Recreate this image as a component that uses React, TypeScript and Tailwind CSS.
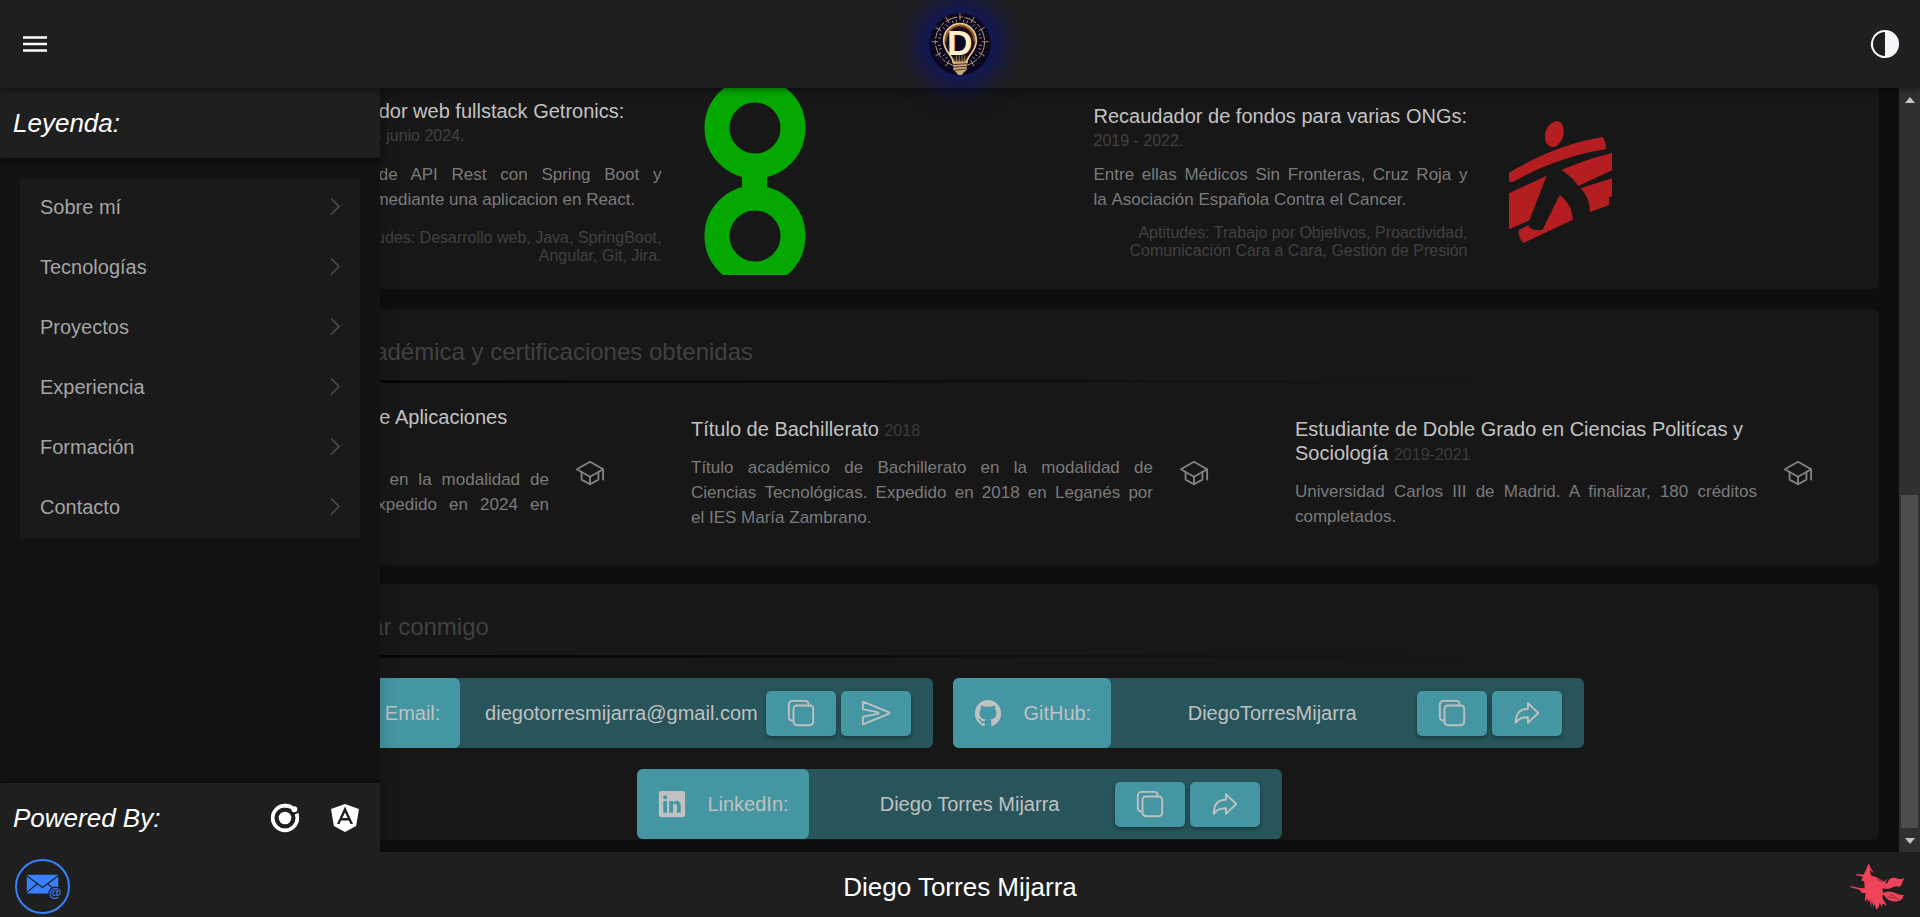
import type { ReactNode } from "react";
import type { IconType } from "react-icons";
import {
  IoArrowRedoOutline,
  IoContrast,
  IoCopyOutline,
  IoLogoAngular,
  IoLogoGithub,
  IoLogoLinkedin,
  IoMail,
  IoSchoolOutline,
  IoSendOutline,
} from "react-icons/io5";

const menuItems = ["Sobre mí", "Tecnologías", "Proyectos", "Experiencia", "Formación", "Contacto"];

const barShadow =
  "shadow-[0_2px_4px_-1px_rgba(0,0,0,0.2),0_4px_5px_rgba(0,0,0,0.14),0_1px_10px_rgba(0,0,0,0.12)]";

const raysAngles = Array.from({ length: 36 }, (_, i) => i * 10);

function BulbLogo() {
  return (
    <svg viewBox="87 39 186 186" className="size-[62px] rounded-full shadow-[0_0_30px_8px_#0a1478]" aria-hidden="true">
      <defs>
        <radialGradient id="bulb">
          <stop offset="0" stopColor="#0c0820" />
          <stop offset="0.78" stopColor="#150c1c" />
          <stop offset="1" stopColor="#8a5a2c" />
        </radialGradient>
      </defs>
      <circle cx="180" cy="132" r="93" fill="#0a0620" />
      <circle cx="180" cy="125" r="74" fill="none" stroke="#b89c70" strokeWidth="3" strokeDasharray="38 5 12 5" />
      <circle cx="180" cy="125" r="84" fill="none" stroke="#5e4c3c" strokeWidth="2" strokeDasharray="3 12" />
      <g stroke="#bda279" strokeWidth="2.5">
        {raysAngles.map((a) => (
          <line key={a} x1="180" y1={a % 30 === 0 ? 40 : 58} x2="180" y2={a % 30 === 0 ? 60 : 66} transform={`rotate(${a} 180 125)`} />
        ))}
      </g>
      <path
        d="M160 188C158 165 131 155 131 122a49 51 0 0 1 98 0c0 33-27 43-29 66Z"
        fill="url(#bulb)"
        stroke="#e9c98d"
        strokeWidth="5"
      />
      <path d="M137 122a43 46 0 0 1 86 0" fill="none" stroke="#a4682f" strokeWidth="4" />
      <path d="M170 166v20M178 166v20M186 166v20M194 166v20" stroke="#c7a468" strokeWidth="2" />
      <path d="M160 187h40v22l-8 8-7 8h-10l-7-8-8-8Z" fill="#c6a87c" />
      <path d="M160 194l40-3M160 202l40-3M163 211l34-4" stroke="#4c3323" strokeWidth="3" />
      <text x="141" y="166" fontSize="106" fontWeight="700" fontFamily="Liberation Sans, sans-serif" fill="#fdf0c8">
        D
      </text>
    </svg>
  );
}

function GetronicsLogo() {
  return (
    <svg viewBox="0 0 102 187" className="h-[187px] w-[102px] shrink-0" aria-hidden="true">
      <g fill="none" stroke="#04a800" strokeWidth="25">
        <circle cx="51" cy="40" r="38" />
        <circle cx="51" cy="148" r="38" />
      </g>
      <rect x="38" y="85" width="25" height="18" fill="#04a800" />
    </svg>
  );
}

function DoctorsLogo() {
  return (
    <svg viewBox="559 360 252 366" preserveAspectRatio="none" className="h-[122px] w-[103px] shrink-0" fill="#b51e20" aria-hidden="true">
      <path d="M677 360C688 362 694 376 693 396C691 418 679 437 668 438C655 438 646 425 647 404C648 382 661 361 677 360Z" />
      <path d="M559 515C625 466 706 424 788 408C794 417 797 430 796 445C718 460 640 493 567 544L559 541Z" />
      <path d="M559 577L651 524L609 658L559 685Z" />
      <path d="M687 507C725 487 768 469 811 456V508L729 555C718 536 702 518 687 507Z" />
      <path d="M734 562L811 532V587L804 588V612L757 633C756 603 749 579 734 562Z" />
      <path d="M683 582C704 602 714 626 715 656L595 726C585 717 581 703 583 687L606 673C611 686 627 690 641 686Z" />
    </svg>
  );
}

function WitchIcon() {
  return (
    <svg viewBox="91 69 166 143" className="h-[47px] w-[55px]" aria-hidden="true">
      <path
        fill="#ee4359"
        d="M147 70L151 80L161 97L159 98L151 89L154 107L165 110C176 112 184 123 195 126L202 117C203 124 199 130 195 132L205 130C206 121 211 115 222 114C230 113 237 118 243 118C249 118 253 117 255 114C254 121 251 125 247 128L250 128C248 135 244 139 240 142C234 138 226 141 218 144C207 149 196 148 188 146C191 151 191 156 190 160L201 157C212 153 225 158 232 162C240 166 248 167 256 166C249 170 252 174 250 177C240 189 215 189 203 178L191 165C187 172 190 179 194 184L203 200L189 192L188 204L181 190L178 202L171 211L165 192L163 204L156 184L155 204L149 180L144 190L144 176L135 188L138 160L128 160L121 155L122 151L92 143L92 139L120 145L136 146C132 140 137 132 132 124L124 122L129 113L126 109L108 106V103L132 104L138 92Z"
      />
      <path d="M172 117L188 127M205 172L240 179M210 164L228 171" fill="none" stroke="#1f1f1f" strokeWidth="1.5" />
    </svg>
  );
}

function IonicIcon() {
  return (
    <svg viewBox="-48 -48 96 96" className="size-8" aria-hidden="true">
      <circle r="37" fill="none" stroke="#fff" strokeWidth="11" />
      <circle r="19" fill="#fff" />
      <circle cx="28" cy="-25" r="14" fill="#1f1f1f" />
      <path d="M12 -42L24 -36L18 -26L6 -32Z" fill="#1f1f1f" />
      <path d="M0 -42.500C10 -42.500 18 -40 25 -35L20 -25C14 -30 8 -31.500 0 -31.500Z" fill="#fff" />
      <circle cx="28" cy="-26" r="9" fill="#fff" />
    </svg>
  );
}

function MailBadge() {
  return (
    <svg viewBox="0 0 56 56" className="size-[55px]" aria-hidden="true">
      <circle cx="28" cy="28" r="27" fill="none" stroke="#3880ff" strokeWidth="2" />
      <rect x="12" y="16" width="32" height="19" rx="1" fill="#3880ff" />
      <path d="M12 17l16 12 16-12M12 34l11-9M44 34l-11-9" fill="none" stroke="#1f1f1f" strokeWidth="1.2" />
      <circle cx="41" cy="35" r="7" fill="#1f1f1f" />
      <text x="41" y="39" textAnchor="middle" fontSize="13" fontWeight="700" fontFamily="Liberation Sans, sans-serif" fill="#3880ff">
        @
      </text>
    </svg>
  );
}

function SectionHeading({ children }: { children: ReactNode }) {
  return (
    <header>
      <h2 className="flex h-[71px] items-center pt-[14px] pl-[18px] text-2xl text-[#414141]">{children}</h2>
      <div className="h-[3px] w-4/5 bg-linear-to-r from-black to-transparent" />
    </header>
  );
}

type JobProps = { title: string; dates: string; text: string; skills: string; roomy?: boolean; logo: ReactNode };

function Job({ title, dates, text, skills, roomy, logo }: JobProps) {
  return (
    <article className="w-[550px] pl-4">
      <div
        className={
          roomy
            ? "flex items-center justify-between border-b border-[#1b1b1b] pr-4"
            : "flex items-center justify-between border-b border-[#1b1b1b] py-[7px] pr-4"
        }
      >
        <div className={roomy ? "flex w-[374px] flex-col gap-[17px]" : "flex w-[374px] flex-col gap-3"}>
          <div>
            <h3 className="text-xl leading-6 text-[#c3c3c3]">{title}</h3>
            <p className="pt-1 text-base leading-[18px] text-[#414141]">{dates}</p>
          </div>
          <p className="text-justify text-[17px] leading-[25px] text-[#7b7b7b]">{text}</p>
          <p className="text-right text-base leading-[18px] text-[#414141]">{skills}</p>
        </div>
        {logo}
      </div>
    </article>
  );
}

function Degree({ title, year, text }: { title: string; year: string; text: string }) {
  return (
    <article className="flex min-w-0 flex-1 items-center gap-[26px] border-b border-[#1b1b1b] px-[15px] py-[10px]">
      <div className="flex-1">
        <h3 className="text-xl leading-6 text-[#c3c3c3]">
          {title} <span className="text-base leading-6 text-[#3b3b3b]">{year}</span>
        </h3>
        <p className="pt-3 text-justify text-[17px] leading-[25px] text-[#7b7b7b]">{text}</p>
      </div>
      <IoSchoolOutline className="size-[30px] shrink-0 text-[#828282]" />
    </article>
  );
}

type ContactProps = { icon: IconType; label: string; value: string; action: IconType; actionLabel: string; spaced?: boolean };

function Contact({ icon: Icon, label, value, action: Action, actionLabel, spaced }: ContactProps) {
  const button =
    "flex h-[45px] w-[70px] items-center justify-center rounded-[5px] bg-[#4396a2] shadow-[0_2px_4px_rgba(0,0,0,0.35)]";
  return (
    <div className={spaced ? "ml-5 flex h-[70px] rounded-md bg-[#27555b] pr-[22px]" : "flex h-[70px] rounded-md bg-[#27555b] pr-[22px]"}>
      <div className="flex items-center gap-5 rounded-md bg-[#4396a2] px-5 text-xl text-[#c1c1c1]">
        <Icon className="size-[30px]" />
        <span>{label}</span>
      </div>
      <p className="ml-4 flex w-[290px] items-center justify-center text-xl text-[#c1c1c1]">{value}</p>
      <div className="flex items-center gap-[5px] text-[#c1c1c1]">
        <button type="button" aria-label={`Copiar ${label}`} className={button}>
          <IoCopyOutline className="size-[30px]" />
        </button>
        <button type="button" aria-label={actionLabel} className={button}>
          <Action className="size-[30px]" />
        </button>
      </div>
    </div>
  );
}

export default function App() {
  return (
    <div className="flex h-screen flex-col overflow-hidden bg-[#0e0e0e] font-['Liberation_Sans',Arial,sans-serif] text-white">
      <header className={`relative z-20 grid h-22 shrink-0 grid-cols-[1fr_auto_1fr] items-center bg-[#1f1f1f] ${barShadow}`}>
        <div className="flex pl-[23px]">
          <button type="button" aria-label="Menú">
            <svg viewBox="0 0 24 16" className="h-4 w-6" fill="#fff" aria-hidden="true">
              <path d="M0 .2h24v2.600H0zM0 6.700h24v2.600H0zM0 13.200h24v2.600H0z" />
            </svg>
          </button>
        </div>
        <BulbLogo />
        <div className="flex justify-end pr-[19px]">
          <button type="button" aria-label="Cambiar tema" className="text-[#f4f5f8]">
            <IoContrast className="size-8" />
          </button>
        </div>
      </header>

      <div className="relative flex min-h-0 flex-1">
        <main className="flex min-w-0 flex-1 flex-col overflow-hidden px-5">
          <section className="flex h-[201px] shrink-0 items-start justify-center gap-64 rounded-b-md bg-[#171717]">
            <Job
              title="Desarrollador web fullstack Getronics:"
              dates="Marzo 2024 - junio 2024."
              text="Desarrollo de API Rest con Spring Boot y consumida mediante una aplicacion en React."
              skills="Aptitudes: Desarrollo web, Java, SpringBoot, Angular, Git, Jira."
              roomy
              logo={<GetronicsLogo />}
            />
            <div className="flex h-[188px] items-center">
              <Job
                title="Recaudador de fondos para varias ONGs:"
                dates="2019 - 2022."
                text={"Entre ellas Médicos Sin Fronteras, Cruz Roja y la\u00a0Asociación Española Contra el Cancer."}
                skills="Aptitudes: Trabajo por Objetivos, Proactividad, Comunicación Cara a Cara, Gestión de Presión"
                logo={<DoctorsLogo />}
              />
            </div>
          </section>

          <section className="mt-5 flex h-64 shrink-0 flex-col rounded-md bg-[#171717]">
            <SectionHeading>Información de la Formación académica y certificaciones obtenidas</SectionHeading>
            <div className="flex flex-1 items-center gap-14 pr-[51px] pb-px pl-[52px]">
              <Degree
                title="Técnico Superior en Desarrollo de Aplicaciones Web"
                year="2024"
                text={"Título académico de Grado superior en la modalidad de Desarrollo de Aplicaciones Web. Expedido en 2024 en Leganés\u00a0por el IES."}
              />
              <Degree
                title="Título de Bachillerato"
                year="2018"
                text={"Título académico de Bachillerato en la modalidad de Ciencias\u00a0Tecnológicas. Expedido en 2018 en Leganés por el\u00a0IES María Zambrano."}
              />
              <Degree
                title="Estudiante de Doble Grado en Ciencias Politícas y Sociología"
                year="2019-2021"
                text="Universidad Carlos III de Madrid. A finalizar, 180 créditos completados."
              />
            </div>
          </section>

          <section className="mt-[19px] h-64 shrink-0 rounded-md bg-[#171717]">
            <SectionHeading>Diferentes medios para contactar conmigo</SectionHeading>
            <div className="flex flex-wrap justify-center gap-y-[21px] px-40 pt-5">
              <Contact icon={IoMail} label="Email:" value="diegotorresmijarra@gmail.com" action={IoSendOutline} actionLabel="Enviar correo" />
              <Contact icon={IoLogoGithub} label="GitHub:" value="DiegoTorresMijarra" action={IoArrowRedoOutline} actionLabel="Abrir GitHub" spaced />
              <Contact icon={IoLogoLinkedin} label="LinkedIn:" value="Diego Torres Mijarra" action={IoArrowRedoOutline} actionLabel="Abrir LinkedIn" spaced />
            </div>
          </section>
        </main>

        <div className="flex w-[21px] flex-col items-center bg-[#303030] py-2" aria-hidden="true">
          <svg viewBox="0 0 10 6" className="mt-px h-[6px] w-[10px]" fill="#c4c4c4">
            <path d="M5 0l5 6H0z" />
          </svg>
          <div className="flex w-full flex-1 flex-col justify-end px-[2px] pb-[10px]">
            <div className="h-[46%] bg-[#4d4d4d]" />
          </div>
          <svg viewBox="0 0 10 6" className="h-[6px] w-[10px]" fill="#c4c4c4">
            <path d="M0 0h10l-5 6z" />
          </svg>
        </div>

        <aside className="absolute inset-y-0 left-0 flex w-[380px] flex-col bg-[#121212] shadow-[0_0_18px_rgba(0,0,0,0.18)]">
          <h1 className={`flex h-[70px] shrink-0 items-center bg-[#1f1f1f] pl-[13px] text-[26px] italic ${barShadow}`}>Leyenda:</h1>
          <nav className="mx-5 mt-5 flex flex-1 flex-col">
            {menuItems.map((item) => (
              <a key={item} href="#" className="h-[60px] bg-[#1a1a1a] pl-5 text-xl text-[#a5a5a5]">
                <span className="flex h-full items-center justify-between border-b border-[#1e1e1e] pr-5 pb-[2px]">
                  {item}
                  <svg viewBox="0 0 10 17" className="h-[17px] w-[10px]" fill="none" stroke="#4b4b4b" strokeWidth="1.600" aria-hidden="true">
                    <path d="M1 .5l8 8-8 8" />
                  </svg>
                </span>
              </a>
            ))}
          </nav>
          <div className="flex h-[69px] shrink-0 items-center bg-[#1f1f1f] pr-[19px] pl-[13px] shadow-[0_-2px_6px_rgba(0,0,0,0.3)]">
            <p className="flex-1 pt-[2px] text-[26px] italic">Powered By:</p>
            <div className="flex gap-7">
              <IonicIcon />
              <IoLogoAngular className="size-8" />
            </div>
          </div>
        </aside>
      </div>

      <footer className="relative z-10 flex h-[65px] shrink-0 items-center bg-[#1f1f1f] px-[15px] pt-1">
        <a href="#" aria-label="Correo" className="flex flex-1">
          <MailBadge />
        </a>
        <p className="pt-[2px] text-[26px]">Diego Torres Mijarra</p>
        <a href="#" aria-label="Bruja" className="flex flex-1 justify-end">
          <WitchIcon />
        </a>
      </footer>
    </div>
  );
}
